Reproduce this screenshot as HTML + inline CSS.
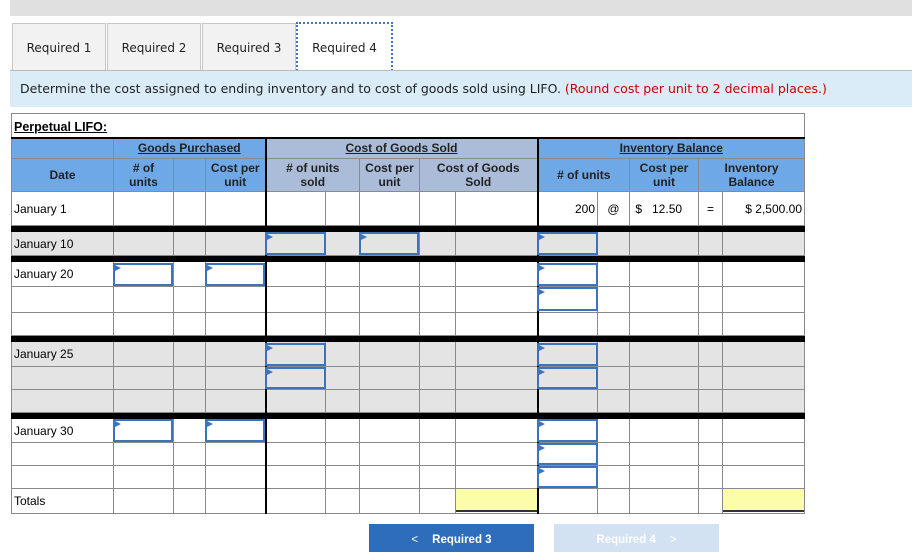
<!DOCTYPE html>
<html><head><style>
body{margin:0;width:912px;height:552px;background:#fff;font-family:"Liberation Sans",Arial,sans-serif;position:relative;overflow:hidden}
.a{position:absolute}
.tab{position:absolute;top:23px;height:47px;background:#f2f2f2;border:1px solid #c8c8c8;border-bottom:none;line-height:48px;text-align:center;color:#222;font-family:"DejaVu Sans","Liberation Sans",sans-serif;font-size:12px}
table{position:absolute;left:11px;top:113px;border-collapse:collapse;table-layout:fixed;font-size:12px}
td{border:1px solid #8a8a8a;padding:0 2px;overflow:hidden;white-space:nowrap}
.hb{background:#6fa8e6;font-weight:bold;text-align:center;color:#222;line-height:14px}
.hg{background:#abbcd9;font-weight:bold;text-align:center;color:#222;line-height:14px}
.u{text-decoration:underline}
.bar td{background:#000;border-color:#000;padding:0}
.g td{background:#e4e4e4}
.tk{border-left:2px solid #000}
.in{position:absolute;border:2px solid #3b74bd;box-sizing:border-box;background:transparent}
.in:before{content:"";position:absolute;left:0;top:0;border-left:6px solid #3b74bd;border-top:3px solid transparent;border-bottom:3px solid transparent}
.y{position:absolute;background:#fbfda8;border-bottom:2px solid #333;box-sizing:border-box}
</style></head><body>
<div class="a" style="left:10px;top:0;width:902px;height:16px;background:#e0e0e0"></div>
<div class="tab" style="left:12px;width:92px">Required 1</div>
<div class="tab" style="left:107px;width:92px">Required 2</div>
<div class="tab" style="left:202px;width:92px">Required 3</div>
<div class="tab" style="left:296px;width:93px;background:#fff;border:2px dotted #3b74bd;top:22px;height:48px">Required 4</div>
<div class="a" style="left:10px;top:70px;width:902px;height:1px;background:#bbb"></div>
<div class="a" style="left:10px;top:71px;width:902px;height:36px;background:#d9ecf8;font-family:'DejaVu Sans','Liberation Sans',sans-serif;font-size:12.5px;line-height:36px;color:#222;padding-left:10px;box-sizing:border-box">Determine the cost assigned to ending inventory and to cost of goods sold using LIFO. <span style="color:#c00">(Round cost per unit to 2 decimal places.)</span></div>

<table>
<colgroup><col style="width:102px"><col style="width:60px"><col style="width:32px"><col style="width:60px"><col style="width:60px"><col style="width:34px"><col style="width:60px"><col style="width:36px"><col style="width:82px"><col style="width:60px"><col style="width:32px"><col style="width:69px"><col style="width:24px"><col style="width:82px"></colgroup>
<tr style="height:24px"><td colspan="14" style="font-weight:bold;font-size:12.5px;vertical-align:bottom;padding-bottom:3px"><span class="u">Perpetual LIFO:</span></td></tr>
<tr style="height:21px"><td class="hb" style="border-top:2px solid #000"></td><td class="hb" colspan="3" style="border-top:2px solid #000"><span class="u">Goods Purchased</span></td><td class="hg tk" colspan="5" style="border-top:2px solid #000"><span class="u">Cost of Goods Sold</span></td><td class="hb tk" colspan="5" style="border-top:2px solid #000"><span class="u">Inventory Balance</span></td></tr>
<tr style="height:33px"><td class="hb">Date</td><td class="hb"># of<br>units</td><td class="hb"></td><td class="hb">Cost per<br>unit</td><td class="hg tk" colspan="2"># of units<br>sold</td><td class="hg">Cost per<br>unit</td><td class="hg" colspan="2">Cost of Goods<br>Sold</td><td class="hb tk" colspan="2"># of units</td><td class="hb">Cost per<br>unit</td><td class="hb" colspan="2">Inventory<br>Balance</td></tr>
<tr style="height:34px"><td>January 1</td><td></td><td></td><td></td><td class="tk"></td><td></td><td></td><td></td><td></td><td class="tk" style="text-align:right">200</td><td style="text-align:center">@</td><td>&nbsp;$ &nbsp;&nbsp;12.50</td><td style="text-align:center">=</td><td style="text-align:right">$ 2,500.00</td></tr>
<tr class="bar" style="height:6px"><td colspan="14"></td></tr>
<tr class="g" style="height:24px"><td>January 10</td><td></td><td></td><td></td><td class="tk"></td><td></td><td></td><td></td><td></td><td class="tk"></td><td></td><td></td><td></td><td></td></tr>
<tr class="bar" style="height:6px"><td colspan="14"></td></tr>
<tr style="height:25px"><td>January 20</td><td></td><td></td><td></td><td class="tk"></td><td></td><td></td><td></td><td></td><td class="tk"></td><td></td><td></td><td></td><td></td></tr>
<tr style="height:26px"><td></td><td></td><td></td><td></td><td class="tk"></td><td></td><td></td><td></td><td></td><td class="tk"></td><td></td><td></td><td></td><td></td></tr>
<tr style="height:23px"><td></td><td></td><td></td><td></td><td class="tk"></td><td></td><td></td><td></td><td></td><td class="tk"></td><td></td><td></td><td></td><td></td></tr>
<tr class="bar" style="height:6px"><td colspan="14"></td></tr>
<tr class="g" style="height:25px"><td>January 25</td><td></td><td></td><td></td><td class="tk"></td><td></td><td></td><td></td><td></td><td class="tk"></td><td></td><td></td><td></td><td></td></tr>
<tr class="g" style="height:23px"><td></td><td></td><td></td><td></td><td class="tk"></td><td></td><td></td><td></td><td></td><td class="tk"></td><td></td><td></td><td></td><td></td></tr>
<tr class="g" style="height:23px"><td></td><td></td><td></td><td></td><td class="tk"></td><td></td><td></td><td></td><td></td><td class="tk"></td><td></td><td></td><td></td><td></td></tr>
<tr class="bar" style="height:6px"><td colspan="14"></td></tr>
<tr style="height:24px"><td>January 30</td><td></td><td></td><td></td><td class="tk"></td><td></td><td></td><td></td><td></td><td class="tk"></td><td></td><td></td><td></td><td></td></tr>
<tr style="height:23px"><td></td><td></td><td></td><td></td><td class="tk"></td><td></td><td></td><td></td><td></td><td class="tk"></td><td></td><td></td><td></td><td></td></tr>
<tr style="height:23px"><td></td><td></td><td></td><td></td><td class="tk"></td><td></td><td></td><td></td><td></td><td class="tk"></td><td></td><td></td><td></td><td></td></tr>
<tr style="height:25px"><td>Totals</td><td></td><td></td><td></td><td class="tk"></td><td></td><td></td><td></td><td></td><td class="tk"></td><td></td><td></td><td></td><td></td></tr>
</table>

<div class="in" style="left:265px;top:232px;width:61px;height:23px"></div>
<div class="in" style="left:359px;top:232px;width:60px;height:23px"></div>
<div class="in" style="left:537px;top:232px;width:61px;height:23px"></div>
<div class="in" style="left:113px;top:263px;width:60px;height:23px"></div>
<div class="in" style="left:205px;top:263px;width:60px;height:23px"></div>
<div class="in" style="left:537px;top:263px;width:61px;height:23px"></div>
<div class="in" style="left:537px;top:287px;width:61px;height:24px"></div>
<div class="in" style="left:265px;top:343px;width:61px;height:23px"></div>
<div class="in" style="left:537px;top:343px;width:61px;height:23px"></div>
<div class="in" style="left:265px;top:367px;width:61px;height:22px"></div>
<div class="in" style="left:537px;top:367px;width:61px;height:22px"></div>
<div class="in" style="left:113px;top:419px;width:60px;height:23px"></div>
<div class="in" style="left:205px;top:419px;width:60px;height:23px"></div>
<div class="in" style="left:537px;top:419px;width:61px;height:23px"></div>
<div class="in" style="left:537px;top:443px;width:61px;height:22px"></div>
<div class="in" style="left:537px;top:466px;width:61px;height:22px"></div>
<div class="y" style="left:456px;top:489px;width:81px;height:23px"></div>
<div class="y" style="left:723px;top:489px;width:81px;height:23px"></div>

<div class="a" style="left:369px;top:524px;width:165px;height:28px;background:#2e6dba;color:#fff;font-weight:bold;font-size:11.5px;line-height:32px;text-align:center"><span style="font-weight:normal;margin-right:14px">&lt;</span>Required 3</div>
<div class="a" style="left:554px;top:524px;width:165px;height:28px;background:#d3e2f3;color:#fff;font-weight:bold;font-size:11.5px;line-height:32px;text-align:center">Required 4<span style="font-weight:normal;margin-left:14px">&gt;</span></div>
</body></html>
